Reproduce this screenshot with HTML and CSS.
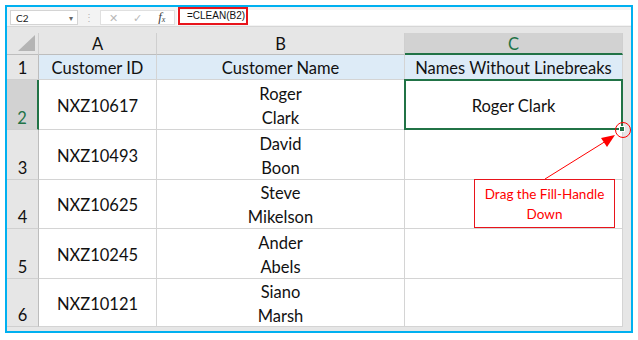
FILE: index.html
```html
<!DOCTYPE html>
<html lang="en">
<head>
  <meta charset="UTF-8" />
  <title>CLEAN function</title>
  <link rel="stylesheet" href="styles.css">
</head>
<body>
  <div class="frame">
    <!-- formula bar -->
    <div class="formula-bar">
      <div class="name-box"><span>C2</span><span class="drop">&#9662;</span></div>
      <div class="dots">&#8942;</div>
      <div class="fx-box">
        <span class="fx-icon cancel">&#10005;</span>
        <span class="fx-icon ok">&#10003;</span>
        <span class="fx-icon fx">f<sub>x</sub></span>
      </div>
      <div class="formula-input">
        <span class="formula-text">=CLEAN(B2)</span>
      </div>
    </div>

    <div class="sheet">
      <div class="grid">
        <div class="corner"><svg width="17" height="16" viewBox="0 0 17 16"><polygon points="17,0 17,16 0,16" fill="#b4b4b4"/></svg></div>
        <div class="col-head">A</div>
        <div class="col-head">B</div>
        <div class="col-head active">C</div>
        <div class="filler"></div>

        <div class="row-head">1</div>
        <div class="cell title">Customer ID</div>
        <div class="cell title">Customer Name</div>
        <div class="cell title">Names Without Linebreaks</div>
        <div class="filler"></div>

        <div class="row-head active">2</div>
        <div class="cell">NXZ10617</div>
        <div class="cell">Roger<br>Clark</div>
        <div class="cell selected">Roger Clark<span class="handle"></span></div>
        <div class="filler"></div>

        <div class="row-head">3</div>
        <div class="cell">NXZ10493</div>
        <div class="cell">David<br>Boon</div>
        <div class="cell"></div>
        <div class="filler"></div>

        <div class="row-head">4</div>
        <div class="cell">NXZ10625</div>
        <div class="cell">Steve<br>Mikelson</div>
        <div class="cell"></div>
        <div class="filler"></div>

        <div class="row-head">5</div>
        <div class="cell">NXZ10245</div>
        <div class="cell">Ander<br>Abels</div>
        <div class="cell"></div>
        <div class="filler"></div>

        <div class="row-head">6</div>
        <div class="cell">NXZ10121</div>
        <div class="cell">Siano<br>Marsh</div>
        <div class="cell"></div>
        <div class="filler"></div>
      </div>

      <!-- annotation -->
      <svg class="arrow" width="638" height="340" viewBox="0 0 638 340">
        <circle cx="623" cy="130" r="7.5" fill="none" stroke="#ff0000" stroke-width="1"/>
        <line x1="545" y1="179" x2="606" y2="141" stroke="#ff0000" stroke-width="1"/>
        <polygon points="615,135 601,138 607,147" fill="#ff0000"/>
      </svg>
      <div class="callout">Drag the Fill-Handle<br>Down</div>
    </div>
  </div>
</body>
</html>
```

FILE: styles.css
```css
* {
  box-sizing: border-box;
}

body {
  margin: 0;
  background: #fff;
  font-family: 'Lato', 'Liberation Sans', sans-serif;
}

.frame {
  position: relative;
  margin: 5px;
  width: 628px;
  height: 328px;
  border: 2px solid #00b0f0;
  overflow: hidden;
  display: flex;
  flex-direction: column;
}

/* formula bar */
.formula-bar {
  height: 20px;
  background: #f3f3f3;
  border-bottom: 1px solid #d6d6d6;
  display: flex;
  align-items: flex-end;
  padding: 0 0 1px 3px;
  font-size: 10px;
  color: #222;
}

.name-box {
  width: 68px;
  height: 15px;
  background: #fff;
  border: 1px solid #d4d4d4;
  display: flex;
  justify-content: space-between;
  align-items: center;
  padding: 0 4px 0 5px;
}

.name-box .drop {
  font-size: 8px;
  color: #666;
}

.dots {
  width: 22px;
  text-align: center;
  color: #b5b5b5;
  font-size: 10px;
  line-height: 15px;
}

.fx-box {
  width: 75px;
  height: 15px;
  background: #fff;
  border: 1px solid #e0e0e0;
  display: flex;
  align-items: center;
}

.fx-icon {
  width: 25px;
  text-align: center;
  color: #b8b8b8;
  font-size: 11px;
}

.fx-icon.fx {
  color: #444;
  font-family: 'Liberation Serif', serif;
  font-style: italic;
  font-size: 13px;
  line-height: 13px;
}

.fx-icon.fx sub {
  font-size: 8px;
  vertical-align: -1px;
}

.formula-input {
  flex: 1;
  height: 15px;
  margin-left: 2px;
  background: #fff;
  position: relative;
}

.formula-text {
  position: absolute;
  left: 1px;
  top: -3px;
  width: 70px;
  height: 18px;
  border: 2px solid #e8141b;
  padding-left: 7px;
  line-height: 14px;
  font-family: 'Liberation Sans', sans-serif;
  font-size: 10px;
  color: #111;
}

/* worksheet */
.sheet {
  flex: 1;
  background: #e6e6e6;
  padding-top: 6px;
}

.grid {
  display: grid;
  grid-template-columns: 32px 118px 248px 218px 8px;
  grid-template-rows: 22px 25px 50px 50px 49px 50px 48px;
  font-size: 16.5px;
  color: #111;
}

.corner {
  display: flex;
  justify-content: flex-end;
  align-items: flex-end;
  padding: 0 3px 3px 0;
  border-right: 1px solid #cfcfcf;
  border-bottom: 1px solid #bdbdbd;
}

.col-head {
  display: flex;
  justify-content: center;
  align-items: center;
  padding-top: 1px;
  border-right: 1px solid #cfcfcf;
  border-bottom: 1px solid #bdbdbd;
}

.col-head.active {
  background: #d2d2d2;
  color: #217346;
  border-bottom: 2px solid #217346;
}

.row-head {
  display: flex;
  justify-content: center;
  align-items: flex-end;
  padding-bottom: 1px;
  border-right: 1px solid #bdbdbd;
  border-bottom: 1px solid #cfcfcf;
}

.row-head.active {
  background: #d2d2d2;
  color: #217346;
  border-right: 2px solid #217346;
}

.filler {
  border-bottom: 1px solid transparent;
}

.cell {
  background: #fff;
  display: flex;
  flex-direction: column;
  justify-content: center;
  align-items: center;
  text-align: center;
  line-height: 24px;
  padding-top: 2px;
  border-right: 1px solid #d4d4d4;
  border-bottom: 1px solid #d4d4d4;
}

.cell.title {
  background: #ddebf7;
  line-height: 20px;
}

.cell.selected {
  position: relative;
  border: 2px solid #217346;
  margin: -1px 0 0 -1px;
}

.handle {
  position: absolute;
  right: -4px;
  bottom: -4px;
  width: 6px;
  height: 6px;
  background: #217346;
  border: 1px solid #fff;
}

/* annotation */
.arrow {
  position: absolute;
  left: -7px;
  top: -7px;
  pointer-events: none;
}

.callout {
  position: absolute;
  left: 467px;
  top: 172px;
  width: 141px;
  height: 49px;
  background: #fff;
  border: 1px solid #e8141b;
  color: #ff0000;
  font-size: 13.5px;
  line-height: 20px;
  text-align: center;
  padding-top: 4px;
}
```
